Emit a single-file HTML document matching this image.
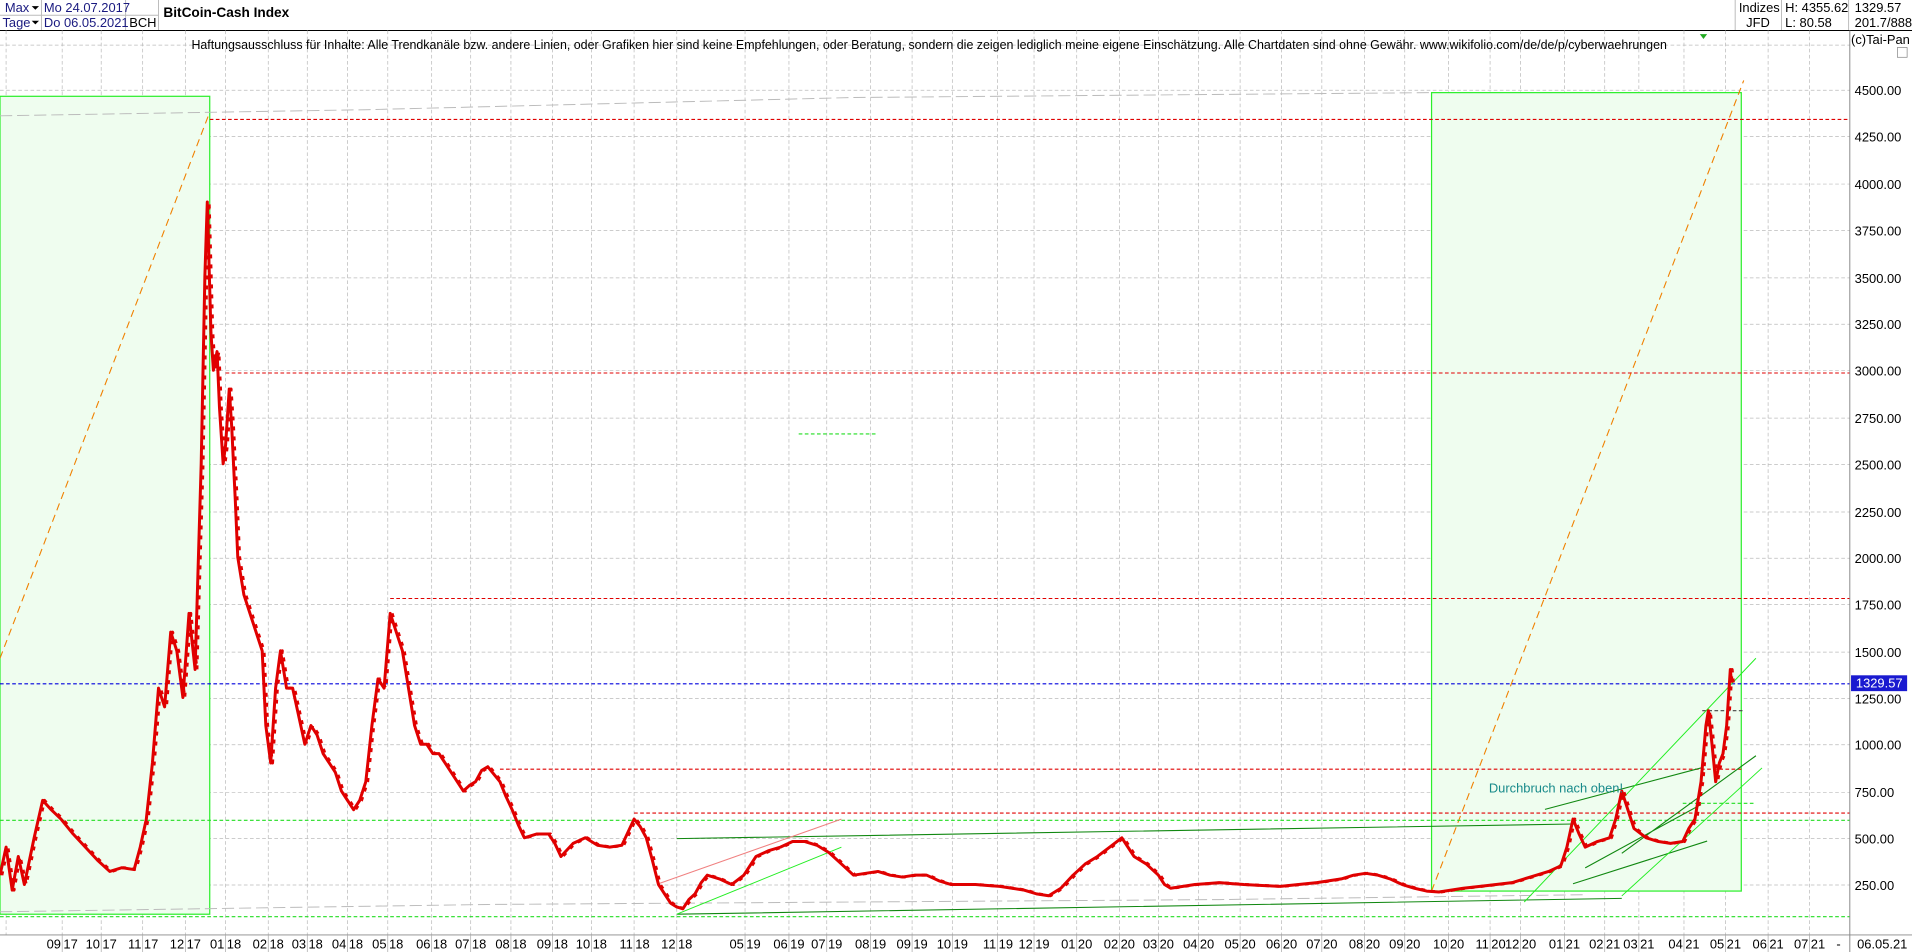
<!DOCTYPE html>
<html><head><meta charset="utf-8"><style>
html,body{margin:0;padding:0;background:#fff;overflow:hidden}
svg{display:block}
text{font-family:"Liberation Sans",sans-serif;font-size:10.6px;fill:#000}
.m{text-anchor:end}
</style></head><body>
<svg width="1912" height="952" viewBox="0 0 1568 781" preserveAspectRatio="none" xmlns="http://www.w3.org/2000/svg">
<rect width="1568" height="781" fill="#fff"/>
<g stroke="#bbb" stroke-width="0.8" fill="none">
<line x1="0" y1="12.5" x2="130" y2="12.5"/>
<line x1="34" y1="0" x2="34" y2="25"/>
<line x1="103" y1="0" x2="103" y2="25"/>
<line x1="130" y1="0" x2="130" y2="25"/>
<line x1="1423" y1="0" x2="1423" y2="25"/>
<line x1="1461" y1="0" x2="1461" y2="25"/>
<line x1="1516" y1="0" x2="1516" y2="25"/>
</g>
<line x1="0" y1="25" x2="1568" y2="25" stroke="#000" stroke-width="0.8"/>
<text x="4" y="10" style="fill:#1a1a80">Max</text><path d="M26 5h6l-3 3z" fill="#000"/>
<text x="2" y="22" style="fill:#1a1a80">Tage</text><path d="M26 17h6l-3 3z" fill="#000"/>
<text x="36" y="10" style="fill:#1a1a80">Mo 24.07.2017</text>
<text x="36" y="22" style="fill:#1a1a80">Do 06.05.2021</text>
<text x="106" y="22">BCH</text>
<text x="134" y="14" style="font-weight:bold;font-size:11.2px">BitCoin-Cash Index</text>
<text x="1426" y="10">Indizes</text>
<text x="1432" y="22">JFD</text>
<text x="1464" y="10">H: 4355.62</text>
<text x="1464" y="22">L: 80.58</text>
<text x="1521" y="10">1329.57</text>
<text x="1521" y="22">201.7/888</text>
<g stroke="#bbb" stroke-width="0.6" stroke-dasharray="3,2" fill="none">
<path d="M0 74H1517M0 112H1517M0 151H1517M0 189H1517M0 228H1517M0 266H1517M0 304H1517M0 343H1517M0 381H1517M0 420H1517M0 458H1517M0 496H1517M0 535H1517M0 573H1517M0 611H1517M0 650H1517M0 688H1517M0 726H1517M0 37H1517"/>
<path d="M5 25V767M51 25V767M83 25V767M117 25V767M152 25V767M185 25V767M220 25V767M252 25V767M285 25V767M318 25V767M354 25V767M386 25V767M419 25V767M453 25V767M485 25V767M520 25V767M555 25V767M611 25V767M647 25V767M678 25V767M714 25V767M748 25V767M781 25V767M818 25V767M848 25V767M883 25V767M918 25V767M950 25V767M983 25V767M1017 25V767M1051 25V767M1084 25V767M1119 25V767M1152 25V767M1188 25V767M1222 25V767M1247 25V767M1283 25V767M1316 25V767M1344 25V767M1381 25V767M1415 25V767M1450 25V767M1484 25V767"/>
</g>
<rect x="0" y="79" width="172" height="671" fill="#effdef" stroke="#2bef2b" stroke-width="1"/>
<rect x="1174" y="76" width="254" height="655" fill="#effdef" stroke="#2bef2b" stroke-width="1"/>
<path d="M0 540L172 92M1174 731L1430 66" stroke="#f08000" stroke-width="0.9" stroke-dasharray="6,4" fill="none"/>
<path d="M0 95L300 90L700 80L1174 76M0 748L400 742L1000 738L1300 734" stroke="#bbb" stroke-width="0.8" stroke-dasharray="10,4" fill="none"/>
<g stroke-width="0.9" stroke-dasharray="3,2" fill="none">
<path d="M172 98H1517M185 306H1517M320 491H1517M410 631H1430M520 667H1517" stroke="#e00000"/>
<path d="M0 561H1517" stroke="#0000dd"/>
<path d="M0 673H1517M0 752H1517M655 356H720M1380 659H1440" stroke="#22dd22"/>
<path d="M1396 583H1430" stroke="#444"/>
</g>
<g stroke="#118811" stroke-width="0.9" fill="none">
<path d="M555 688L1290 676M555 750L1330 737M1267 664L1395 630M1290 725L1400 690M1330 700L1440 620M1300 712L1395 660"/>
</g>
<g stroke="#22ee22" stroke-width="0.8" fill="none">
<path d="M555 750L690 695M1250 740L1440 540M1330 735L1445 630"/>
<path d="M540 725L690 672" stroke="#f08080"/>
</g>
<g transform="translate(0,764) scale(1,-0.15341)">
<polyline id="pr" fill="none" stroke="#e00000" stroke-width="3" stroke-linejoin="round" vector-effect="non-scaling-stroke" points="0,300 5,450 10,220 15,400 20,250 28,500 35,700 42,650 50,600 60,520 70,450 80,380 90,320 100,340 110,330 115,450 120,600 125,900 130,1300 135,1200 140,1600 145,1500 150,1250 155,1700 160,1400 165,2500 168,3500 170,3900 173,3200 175,3000 178,3100 180,2800 183,2500 185,2600 188,2900 190,2700 193,2300 195,2000 200,1800 205,1700 210,1600 215,1500 218,1100 222,900 226,1300 230,1500 235,1300 240,1300 245,1150 250,1000 255,1100 260,1050 265,950 270,900 275,850 280,750 285,700 290,650 295,700 300,800 305,1100 310,1350 315,1300 320,1700 325,1600 330,1500 335,1300 340,1100 345,1000 350,1000 355,950 360,950 365,900 370,850 375,800 380,750 385,780 390,800 395,860 400,880 405,840 410,800 415,720 420,650 425,570 430,500 440,520 450,520 455,470 460,400 470,470 480,500 490,460 500,450 510,460 520,600 525,560 530,500 535,380 540,250 545,200 550,150 555,130 560,120 565,170 570,200 575,260 580,300 590,280 600,250 610,300 620,400 630,430 640,450 650,480 660,480 670,460 680,420 690,360 700,300 710,310 720,320 730,300 740,290 750,300 760,300 770,270 780,250 790,250 800,250 810,245 820,240 830,230 840,220 850,200 860,190 870,230 880,300 890,360 900,400 910,450 920,500 925,450 930,400 940,360 950,300 955,250 960,230 970,240 980,250 990,255 1000,260 1010,255 1020,250 1035,245 1050,240 1065,250 1080,260 1090,270 1100,280 1110,300 1120,310 1130,300 1140,280 1150,250 1160,230 1170,215 1180,210 1190,220 1200,230 1220,245 1240,260 1250,280 1260,300 1270,320 1280,350 1285,450 1290,600 1295,520 1300,450 1310,480 1320,500 1325,600 1330,750 1335,650 1340,550 1350,500 1360,480 1370,470 1380,480 1385,550 1390,600 1395,800 1399,1100 1401,1180 1404,1000 1407,800 1410,900 1413,950 1416,1100 1419,1400 1420,1329"/>
</g>
<g transform="translate(1.5,764) scale(1,-0.15341)">
<use href="#pr" style="stroke:#000;stroke-width:1;stroke-dasharray:4,6"/>
</g>
<text x="1221" y="650" style="fill:#178a8a">Durchbruch nach oben!</text>
<text x="157" y="40" textLength="1210" lengthAdjust="spacingAndGlyphs">Haftungsausschluss für Inhalte: Alle Trendkanäle bzw. andere Linien, oder Grafiken hier sind keine Empfehlungen, oder Beratung, sondern die zeigen lediglich meine eigene Einschätzung. Alle Chartdaten sind ohne Gewähr.  www.wikifolio.com/de/de/p/cyberwaehrungen</text>
<path d="M1394 28h6l-3 4z" fill="#22aa22"/>
<line x1="1517" y1="25" x2="1517" y2="781" stroke="#888" stroke-width="0.8"/>
<text x="1518" y="36">(c)Tai-Pan</text>
<rect x="1556" y="39" width="8" height="8" fill="none" stroke="#888" stroke-width="0.6"/>
<g>
<text x="1521" y="78">4500.00</text><text x="1521" y="116">4250.00</text><text x="1521" y="155">4000.00</text>
<text x="1521" y="193">3750.00</text><text x="1521" y="232">3500.00</text><text x="1521" y="270">3250.00</text>
<text x="1521" y="308">3000.00</text><text x="1521" y="347">2750.00</text><text x="1521" y="385">2500.00</text>
<text x="1521" y="424">2250.00</text><text x="1521" y="462">2000.00</text><text x="1521" y="500">1750.00</text>
<text x="1521" y="539">1500.00</text><text x="1521" y="577">1250.00</text>
<text x="1521" y="615">1000.00</text><text x="1521" y="654">750.00</text><text x="1521" y="692">500.00</text><text x="1521" y="730">250.00</text>
</g>
<rect x="1518" y="554" width="46" height="13" fill="#1a1ad0"/>
<text x="1522" y="564" style="fill:#fff">1329.57</text>
<line x1="0" y1="767" x2="1568" y2="767" stroke="#888" stroke-width="0.8"/>
<g stroke="#aaa" stroke-width="0.6">
<path d="M51 767V781M83 767V781M117 767V781M152 767V781M185 767V781M220 767V781M252 767V781M285 767V781M318 767V781M354 767V781M386 767V781M419 767V781M453 767V781M485 767V781M520 767V781M555 767V781M611 767V781M647 767V781M678 767V781M714 767V781M748 767V781M781 767V781M818 767V781M848 767V781M883 767V781M918 767V781M950 767V781M983 767V781M1017 767V781M1051 767V781M1084 767V781M1119 767V781M1152 767V781M1188 767V781M1222 767V781M1247 767V781M1283 767V781M1316 767V781M1344 767V781M1381 767V781M1415 767V781M1450 767V781M1484 767V781"/>
</g>
<g style="font-size:10.4px">
<text class="m" x="50" y="778">09</text><text x="52" y="778">17</text>
<text class="m" x="82" y="778">10</text><text x="84" y="778">17</text>
<text class="m" x="116" y="778">11</text><text x="118" y="778">17</text>
<text class="m" x="151" y="778">12</text><text x="153" y="778">17</text>
<text class="m" x="184" y="778">01</text><text x="186" y="778">18</text>
<text class="m" x="219" y="778">02</text><text x="221" y="778">18</text>
<text class="m" x="251" y="778">03</text><text x="253" y="778">18</text>
<text class="m" x="284" y="778">04</text><text x="286" y="778">18</text>
<text class="m" x="317" y="778">05</text><text x="319" y="778">18</text>
<text class="m" x="353" y="778">06</text><text x="355" y="778">18</text>
<text class="m" x="385" y="778">07</text><text x="387" y="778">18</text>
<text class="m" x="418" y="778">08</text><text x="420" y="778">18</text>
<text class="m" x="452" y="778">09</text><text x="454" y="778">18</text>
<text class="m" x="484" y="778">10</text><text x="486" y="778">18</text>
<text class="m" x="519" y="778">11</text><text x="521" y="778">18</text>
<text class="m" x="554" y="778">12</text><text x="556" y="778">18</text>
<text class="m" x="610" y="778">05</text><text x="612" y="778">19</text>
<text class="m" x="646" y="778">06</text><text x="648" y="778">19</text>
<text class="m" x="677" y="778">07</text><text x="679" y="778">19</text>
<text class="m" x="713" y="778">08</text><text x="715" y="778">19</text>
<text class="m" x="747" y="778">09</text><text x="749" y="778">19</text>
<text class="m" x="780" y="778">10</text><text x="782" y="778">19</text>
<text class="m" x="817" y="778">11</text><text x="819" y="778">19</text>
<text class="m" x="847" y="778">12</text><text x="849" y="778">19</text>
<text class="m" x="882" y="778">01</text><text x="884" y="778">20</text>
<text class="m" x="917" y="778">02</text><text x="919" y="778">20</text>
<text class="m" x="949" y="778">03</text><text x="951" y="778">20</text>
<text class="m" x="982" y="778">04</text><text x="984" y="778">20</text>
<text class="m" x="1016" y="778">05</text><text x="1018" y="778">20</text>
<text class="m" x="1050" y="778">06</text><text x="1052" y="778">20</text>
<text class="m" x="1083" y="778">07</text><text x="1085" y="778">20</text>
<text class="m" x="1118" y="778">08</text><text x="1120" y="778">20</text>
<text class="m" x="1151" y="778">09</text><text x="1153" y="778">20</text>
<text class="m" x="1187" y="778">10</text><text x="1189" y="778">20</text>
<text class="m" x="1221" y="778">11</text><text x="1223" y="778">20</text>
<text class="m" x="1246" y="778">12</text><text x="1248" y="778">20</text>
<text class="m" x="1282" y="778">01</text><text x="1284" y="778">21</text>
<text class="m" x="1315" y="778">02</text><text x="1317" y="778">21</text>
<text class="m" x="1343" y="778">03</text><text x="1345" y="778">21</text>
<text class="m" x="1380" y="778">04</text><text x="1382" y="778">21</text>
<text class="m" x="1414" y="778">05</text><text x="1416" y="778">21</text>
<text class="m" x="1449" y="778">06</text><text x="1451" y="778">21</text>
<text class="m" x="1483" y="778">07</text><text x="1485" y="778">21</text>
<text x="1506" y="778">-</text>
<text x="1523" y="778">06.05.21</text>
</g>
</svg>
</body></html>
